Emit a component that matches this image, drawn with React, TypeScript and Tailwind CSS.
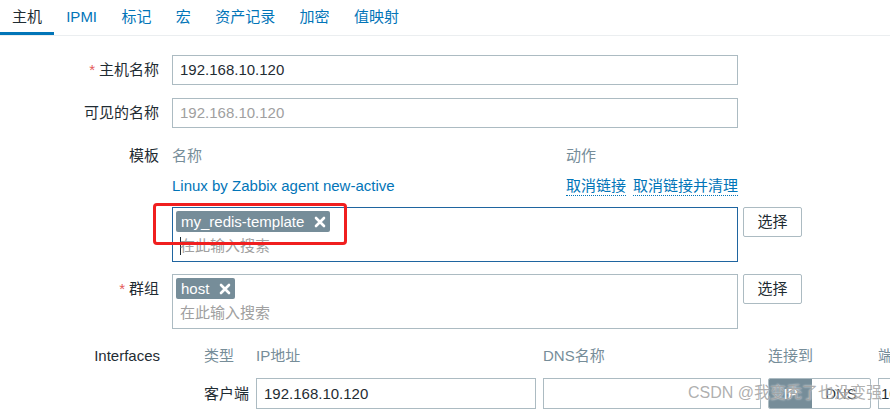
const tabs = ["主机", "IPMI", "标记", "宏", "资产记录", "加密", "值映射"]

function Label({ children, required, top }: { children: React.ReactNode; required?: boolean; top?: boolean }) {
  return (
    <div
      className={
        top
          ? "flex w-[160px] shrink-0 items-start justify-end pr-px pt-[5px] text-[#1f2c33]"
          : "flex w-[160px] shrink-0 items-center justify-end pr-px text-[#1f2c33]"
      }
    >
      {required && <span className="mr-1 text-[#e45959]">*</span>}
      {children}
    </div>
  )
}

function Chip({ text }: { text: string }) {
  return (
    <span className="inline-flex h-[21px] items-center gap-[10px] rounded-[2px] bg-[#768d99] pl-[5px] pr-[4px] text-white">
      {text}
      <svg width="12" height="12" viewBox="0 0 12 12" aria-hidden>
        <path d="M2 2 L10 10 M10 2 L2 10" stroke="white" strokeWidth="2.6" strokeLinecap="round" />
      </svg>
    </span>
  )
}

function SelectButton() {
  return (
    <button
      type="button"
      className="h-[30px] w-[59px] shrink-0 rounded-[2px] border border-[#acbbc2] bg-white text-[#1f2c33]"
    >
      选择
    </button>
  )
}

export default function App() {
  return (
    <div className="relative h-[412px] w-[890px] overflow-hidden bg-white font-['Liberation_Sans','Noto_Sans_CJK_SC',sans-serif] text-[15px] leading-[20px]">
      <div className="flex h-[36px] border-b border-[#ebeef0]">
        {tabs.map((t, i) => (
          <div
            key={t}
            className={
              i === 0
                ? "flex items-center border-b-[3px] border-[#0275b8] pl-3 pr-3 pt-[2px] text-[#1f2c33]"
                : "flex items-center border-b-[3px] border-transparent px-[12.2px] pt-[2px] text-[#0275b8]"
            }
          >
            {t}
          </div>
        ))}
      </div>

      <div className="mt-[19px] flex flex-col">
        <div className="flex h-[30px] gap-3">
          <Label required>主机名称</Label>
          <div className="flex w-[566px] items-center border border-[#acbbc2] px-[7px] text-[#1f2c33]">
            192.168.10.120
          </div>
        </div>

        <div className="mt-[13px] flex h-[30px] gap-3">
          <Label>可见的名称</Label>
          <div className="flex w-[566px] items-center border border-[#acbbc2] px-[7px] text-[#a0a0a0]">
            192.168.10.120
          </div>
        </div>

        <div className="mt-[18px] flex h-[20px] gap-3">
          <Label>模板</Label>
          <div className="flex w-[566px] text-[#768d99]">
            <span className="w-[394px]">名称</span>
            <span>动作</span>
          </div>
        </div>

        <div className="mt-[10px] flex h-[20px] gap-3">
          <div className="w-[160px] shrink-0" />
          <div className="flex w-[566px] text-[#0275b8]">
            <span className="w-[394px]">Linux by Zabbix agent new-active</span>
            <span className="border-b border-dotted border-[#0275b8] leading-[19px]">取消链接</span>
            <span className="ml-[7px] border-b border-dotted border-[#0275b8] leading-[19px]">取消链接并清理</span>
          </div>
        </div>

        <div className="mt-[11px] flex gap-3">
          <div className="w-[160px] shrink-0" />
          <div className="flex gap-[5px]">
            <div className="relative h-[55px] w-[566px] border border-[#1f65a0] px-[3px] pt-[3px]">
              <Chip text="my_redis-template" />
              <div className="mt-[4px] flex items-center pl-[4px] text-[#a0a0a0]">
                <span className="mr-[-1px] h-[18px] w-px bg-[#1f2c33]" />
                在此输入搜索
              </div>
              <div className="absolute left-[-20px] top-[-5px] h-[42px] w-[194px] rounded-[4px] border-[3px] border-[#f01f1f]" />
            </div>
            <SelectButton />
          </div>
        </div>

        <div className="mt-[12px] flex gap-3">
          <Label required top>
            群组
          </Label>
          <div className="flex gap-[5px]">
            <div className="h-[55px] w-[566px] border border-[#acbbc2] px-[3px] pt-[3px]">
              <Chip text="host" />
              <div className="mt-[4px] pl-[4px] text-[#a0a0a0]">在此输入搜索</div>
            </div>
            <SelectButton />
          </div>
        </div>

        <div className="mt-[17px] flex h-[20px] gap-3 text-[#768d99]">
          <div className="flex w-[160px] shrink-0 justify-end text-[#1f2c33]">Interfaces</div>
          <div className="flex gap-[7px] whitespace-nowrap">
            <span className="w-[77px] pl-[32px]">类型</span>
            <span className="w-[280px]">IP地址</span>
            <span className="w-[218px]">DNS名称</span>
            <span className="w-[103px]">连接到</span>
            <span>端口</span>
          </div>
        </div>

        <div className="mt-[12px] flex h-[31px] gap-3">
          <div className="w-[160px] shrink-0" />
          <div className="flex gap-[7px]">
            <div className="flex w-[77px] items-center justify-end text-[#1f2c33]">客户端</div>
            <div className="flex w-[280px] items-center border border-[#acbbc2] px-[7px] text-[#1f2c33]">
              192.168.10.120
            </div>
            <div className="w-[218px] border border-[#acbbc2]" />
            <div className="flex w-[103px] overflow-hidden rounded-[2px] border border-[#acbbc2]">
              <div className="flex w-[43px] items-center justify-center bg-[#768d99] text-white">IP</div>
              <div className="flex flex-1 items-center justify-center text-[#1f2c33]">DNS</div>
            </div>
            <div className="flex w-[60px] items-center border border-[#acbbc2] px-[2px] text-[#1f2c33]">10050</div>
          </div>
        </div>
      </div>

      <div className="absolute left-[688px] top-[382px] text-[16px] leading-[22px] text-[#9a9a9a]/80 [text-shadow:0_0_2px_white]">
        CSDN @我变秃了也没变强
      </div>
    </div>
  )
}
